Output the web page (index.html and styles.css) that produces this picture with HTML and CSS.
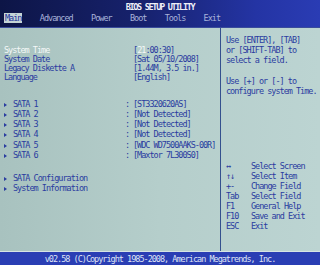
FILE: index.html
```html
<!DOCTYPE html>
<html>
<head>
<meta charset="utf-8">
<link rel="stylesheet" href="styles.css">
</head>
<body>
<div class="screen">
  <header class="top">
    <div class="title">BIOS SETUP UTILITY</div>
    <nav class="tabs">
      <span class="tab active">Main</span>
      <span class="tab">Advanced</span>
      <span class="tab">Power</span>
      <span class="tab">Boot</span>
      <span class="tab">Tools</span>
      <span class="tab">Exit</span>
    </nav>
  </header>
  <main class="panel">
    <section class="left">
      <div class="group g1">
        <div class="row"><span class="label sel">System Time</span><span class="colon"></span><span class="val">[<span class="hl">21</span>:00:30]</span></div>
        <div class="row"><span class="label">System Date</span><span class="colon"></span><span class="val">[Sat 05/10/2008]</span></div>
        <div class="row"><span class="label">Legacy Diskette A</span><span class="colon"></span><span class="val">[1.44M, 3.5 in.]</span></div>
        <div class="row"><span class="label">Language</span><span class="colon"></span><span class="val">[English]</span></div>
      </div>
      <div class="group g2">
        <div class="row"><span class="label"><i class="arrow"></i>SATA 1</span><span class="colon">:</span><span class="val">[ST3320620AS]</span></div>
        <div class="row"><span class="label"><i class="arrow"></i>SATA 2</span><span class="colon">:</span><span class="val">[Not Detected]</span></div>
        <div class="row"><span class="label"><i class="arrow"></i>SATA 3</span><span class="colon">:</span><span class="val">[Not Detected]</span></div>
        <div class="row"><span class="label"><i class="arrow"></i>SATA 4</span><span class="colon">:</span><span class="val">[Not Detected]</span></div>
        <div class="row"><span class="label"><i class="arrow"></i>SATA 5</span><span class="colon">:</span><span class="val">[WDC WD7500AAKS-00R]</span></div>
        <div class="row"><span class="label"><i class="arrow"></i>SATA 6</span><span class="colon">:</span><span class="val">[Maxtor 7L300S0]</span></div>
      </div>
      <div class="group g3">
        <div class="row"><span class="label"><i class="arrow"></i>SATA Configuration</span></div>
        <div class="row"><span class="label"><i class="arrow"></i>System Information</span></div>
      </div>
    </section>
    <aside class="right">
      <div class="help">
        <div>Use [ENTER], [TAB]</div>
        <div>or [SHIFT-TAB] to</div>
        <div>select a field.</div>
        <div class="blank"></div>
        <div>Use [+] or [-] to</div>
        <div>configure system Time.</div>
      </div>
      <div class="keys">
        <span class="k">&#8596;</span><span>Select Screen</span>
        <span class="k">&#8593;&#8595;</span><span>Select Item</span>
        <span class="k">+-</span><span>Change Field</span>
        <span class="k">Tab</span><span>Select Field</span>
        <span class="k">F1</span><span>General Help</span>
        <span class="k">F10</span><span>Save and Exit</span>
        <span class="k">ESC</span><span>Exit</span>
      </div>
    </aside>
  </main>
  <footer class="foot">v02.58 (C)Copyright 1985-2008, American Megatrends, Inc.</footer>
</div>
</body>
</html>
```
FILE: styles.css
```css
* { box-sizing: border-box; margin: 0; padding: 0; }
html, body { width: 320px; height: 265px; overflow: hidden; }
body {
  font-family: "DejaVu Sans Mono", "Liberation Mono", monospace;
  font-size: 8.5px;
  letter-spacing: -1px;
  color: #2a3ca0;
  background: #b3cdca;
}
.screen { width: 320px; height: 265px; display: flex; flex-direction: column; }

.top {
  height: 28px;
  background: linear-gradient(to right, #0d1546 0%, #17226e 45%, #2434a4 80%, #2a3cb4 100%);
  border-bottom: 1px solid #3a4c9c;
}
.title {
  height: 13px;
  padding-top: 2px;
  line-height: 10px;
  text-align: center;
  color: #eef0f8;
  font-weight: bold;
  letter-spacing: -1.3px;
}
.tabs {
  display: flex;
  gap: 16.3px;
  padding-left: 4px;
  height: 10px;
  line-height: 10px;
}
.tab { color: #a8b2da; padding: 0 1px; }
.tab.active { background: #c4d4d6; color: #1e2f98; }

.panel {
  flex: 1;
  display: flex;
  background: linear-gradient(to right, #a8c2bf 0%, #b5cecb 50%, #bcd4d2 100%);
  border-bottom: 1px solid #d6e4e4;
}
.left {
  width: 221px;
  border-right: 1px solid #34508e;
  padding-left: 4px;
  padding-top: 17.5px;
}
.row {
  display: grid;
  grid-template-columns: 121px 8px auto;
  white-space: nowrap;
}
.g1 .row { height: 9.2px; line-height: 9.2px; }
.g2 { margin-top: 16.3px; }
.g2 .row, .g3 .row { height: 10.3px; line-height: 10.3px; }
.g3 { margin-top: 12.8px; }
.sel { color: #f4f8f8; }
.hl { color: #f4f8f8; }
.arrow {
  display: inline-block;
  width: 0; height: 0;
  border-left: 3px solid #2a3ca0;
  border-top: 2px solid transparent;
  border-bottom: 2px solid transparent;
  margin-right: 6px;
  vertical-align: 0;
}
.right {
  flex: 1;
  padding-left: 5px;
  padding-top: 6.5px;
  white-space: nowrap;
}
.help div { height: 10.3px; line-height: 10.3px; }
.keys {
  margin-top: 65px;
  display: grid;
  grid-template-columns: 25px auto;
  grid-auto-rows: 10px;
  line-height: 10px;
}
.foot {
  height: 13px;
  background: #2a3eb4;
  color: #dfe3f4;
  text-align: center;
  line-height: 11px;
  padding-top: 2px;
}
```
